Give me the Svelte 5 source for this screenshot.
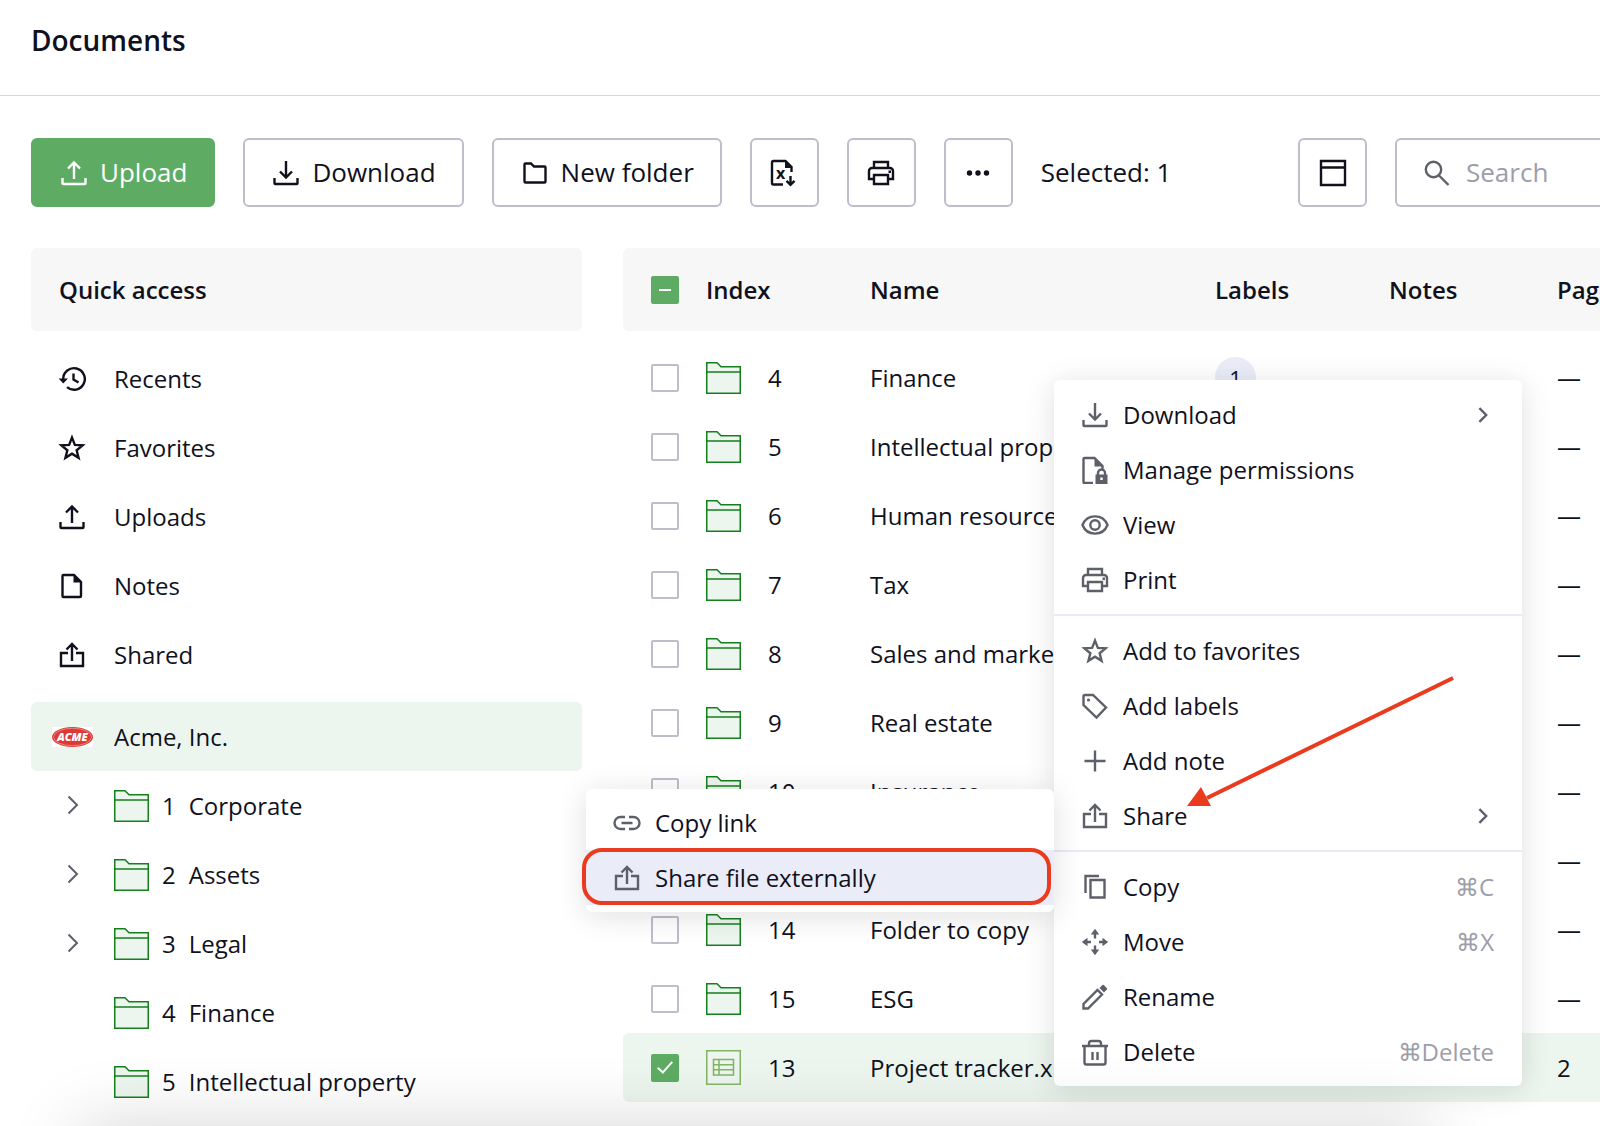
<script lang="ts">
  type Row = {
    index: number;
    name: string;
    labels?: number;
    pages?: number;
    kind: 'folder' | 'sheet';
    selected?: boolean;
  };

  type MenuItem = {
    icon: string;
    label: string;
    shortcut?: string;
    submenu?: MenuItem[];
    active?: boolean;
  };

  // Icons share a 28x28 grid: "line" is stroked, "solid" is filled.
  const icons: Record<string, { line?: string; solid?: string }> = {
    upload: { line: 'M2.5 19v5.2a.8.8 0 0 0 .8.8h21.4a.8.8 0 0 0 .8-.8V19M14 20V3.500M8 9.5l6-6 6 6' },
    download: { line: 'M2.5 19v5.2a.8.8 0 0 0 .8.8h21.4a.8.8 0 0 0 .8-.8V19M14 2v16M8 12.5l6 6 6-6' },
    newFolder: {
      line: 'M3.5 22.5V5.5a1 1 0 0 1 1-1H10l3 3h10.5a1 1 0 0 1 1 1v14a1 1 0 0 1-1 1h-19a1 1 0 0 1-1-1z'
    },
    excel: {
      line: 'M13 25.5H3.5A1.5 1.5 0 0 1 2 24V3.5A1.5 1.5 0 0 1 3.5 2h12l6 6v5M20.5 17v8.5M16.5 21.800l4 4 4-4',
      solid: 'M15 1.5 22.500 9H15z'
    },
    print: {
      line: 'M7 9V3h14v6M7 20H2v-8a3 3 0 0 1 3-3h18a3 3 0 0 1 3 3v8h-5M7 16h14v9H7z',
      solid: 'M21.5 11.5H24V14h-2.5z'
    },
    more: {
      solid:
        'M2.8 14a2.7 2.7 0 1 0 5.4 0a2.7 2.7 0 1 0-5.4 0M11.3 14a2.7 2.7 0 1 0 5.4 0a2.7 2.7 0 1 0-5.4 0M19.8 14a2.7 2.7 0 1 0 5.4 0a2.7 2.7 0 1 0-5.4 0'
    },
    layout: { line: 'M2 2h24v24H2zM2 8.5h24' },
    search: { line: 'M2.8 10.500a7.700 7.700 0 1 0 15.400 0a7.700 7.700 0 1 0-15.400 0M16 16.500l9.500 9.500' },
    history: { line: 'M5.2 14A10.8 10.8 0 1 1 9 22.2M15.5 8.5v6l5 3', solid: 'M.6 13.500H10l-4.700 5z' },
    star: {
      line: 'M14 3.600 16.880 10.840 24.650 11.340 18.660 16.300 20.580 23.860 14 19.700 7.420 23.860 9.340 16.300 3.350 11.340 11.120 10.840z'
    },
    note: { line: 'M4.500 4a1 1 0 0 1 1-1H16l7 7v14a1 1 0 0 1-1 1H5.500a1 1 0 0 1-1-1z', solid: 'M15.500 2.500 23.500 10.500h-8z' },
    share: { line: 'M10 12H3v13h22V12h-7M14 20V3M8.5 8.5 14 3l5.5 5.5' },
    permissions: {
      line: 'M12 27H3.500a1 1 0 0 1-1-1V3a1 1 0 0 1 1-1h10l8 8v2.500M17 19v-2a3.500 3.500 0 0 1 7 0v2',
      solid: 'M13.500 1.500 22.500 10.500h-9zM14.500 18.500h12V28h-12zM19.300 21.500V24h2.400v-2.500z'
    },
    view: { line: 'M1.500 14C6 2.500 22 2.500 26.500 14 22 25.500 6 25.500 1.500 14zM9.300 14a4.700 4.700 0 1 0 9.400 0a4.700 4.700 0 1 0-9.400 0' },
    label: {
      line: 'M2.500 4.500A1.500 1.500 0 0 1 4 3h8L25 15.500 15.500 25.500 2.500 13z',
      solid: 'M5.900 8a1.600 1.600 0 1 0 3.200 0a1.600 1.600 0 1 0-3.200 0'
    },
    plus: { line: 'M14 3.500v21M3.500 14h21' },
    copy: { line: 'M4.500 20V3H18M9.500 7h14v17.500h-14z' },
    move: {
      line: 'M14 5v5.500M14 17.500V23M5 14h5M18 14h5',
      solid: 'M9.800 6.500 14 .8l4.200 5.700zM9.800 21.500 14 27.200l4.200-5.700zM6.500 9.800.8 14l5.700 4.200zM21.500 9.800 27.200 14l-5.700 4.200z'
    },
    rename: {
      line: 'M2.500 25.500v-4.500L16.500 7l4.500 4.500-14 14z',
      solid: 'M18.500 5l2.900-2.900a1 1 0 0 1 1.400 0l3.100 3.100a1 1 0 0 1 0 1.400L23 9.500z'
    },
    trash: {
      line: 'M8 7.500v-2A2.500 2.500 0 0 1 10.500 3h7A2.500 2.500 0 0 1 20 5.500v2M1 8h26M3.500 8v16.500a2 2 0 0 0 2 2h17a2 2 0 0 0 2-2V8M11.500 14v8M16.500 14v8'
    },
    link: { line: 'M12 8H7.500a6 6 0 0 0 0 12H12M16 8h4.500a6 6 0 0 1 0 12H16M8.500 14h11' }
  };

  const quickAccess = [
    { icon: 'history', label: 'Recents' },
    { icon: 'star', label: 'Favorites' },
    { icon: 'upload', label: 'Uploads' },
    { icon: 'note', label: 'Notes' },
    { icon: 'share', label: 'Shared' }
  ];

  const tree = [
    { index: 1, name: 'Corporate', expandable: true },
    { index: 2, name: 'Assets', expandable: true },
    { index: 3, name: 'Legal', expandable: true },
    { index: 4, name: 'Finance', expandable: false },
    { index: 5, name: 'Intellectual property', expandable: false }
  ];

  let rows: Row[] = $state([
    { index: 4, name: 'Finance', labels: 1, kind: 'folder' },
    { index: 5, name: 'Intellectual property', kind: 'folder' },
    { index: 6, name: 'Human resources', kind: 'folder' },
    { index: 7, name: 'Tax', kind: 'folder' },
    { index: 8, name: 'Sales and marketing', kind: 'folder' },
    { index: 9, name: 'Real estate', kind: 'folder' },
    { index: 10, name: 'Insurance', kind: 'folder' },
    { index: 11, name: 'Compliance', kind: 'folder' },
    { index: 14, name: 'Folder to copy', kind: 'folder' },
    { index: 15, name: 'ESG', kind: 'folder' },
    { index: 13, name: 'Project tracker.xlsx', kind: 'sheet', pages: 2, selected: true }
  ]);

  let selectedCount = $derived(rows.filter((row) => row.selected).length);

  const menu: MenuItem[][] = [
    [
      { icon: 'download', label: 'Download', submenu: [] },
      { icon: 'permissions', label: 'Manage permissions' },
      { icon: 'view', label: 'View' },
      { icon: 'print', label: 'Print' }
    ],
    [
      { icon: 'star', label: 'Add to favorites' },
      { icon: 'label', label: 'Add labels' },
      { icon: 'plus', label: 'Add note' },
      {
        icon: 'share',
        label: 'Share',
        submenu: [
          { icon: 'link', label: 'Copy link' },
          { icon: 'share', label: 'Share file externally', active: true }
        ]
      }
    ],
    [
      { icon: 'copy', label: 'Copy', shortcut: '⌘C' },
      { icon: 'move', label: 'Move', shortcut: '⌘X' },
      { icon: 'rename', label: 'Rename' },
      { icon: 'trash', label: 'Delete', shortcut: '⌘Delete' }
    ]
  ];

  function toggleAll(event: Event) {
    const checked = (event.currentTarget as HTMLInputElement).checked;
    rows.forEach((row) => (row.selected = checked));
  }
</script>

{#snippet icon(name: string)}
  <svg class="icon" viewBox="0 0 28 28" aria-hidden="true">
    {#if icons[name].line}<path class="line" d={icons[name].line} />{/if}
    {#if icons[name].solid}<path class="solid" fill-rule="evenodd" d={icons[name].solid} />{/if}
    {#if name === 'excel'}<text class="solid" x="6" y="20">x</text>{/if}
  </svg>
{/snippet}

{#snippet chevron()}
  <svg class="chevron" viewBox="0 0 12 20" aria-hidden="true">
    <path d="M1.5 1.5 10 10l-8.5 8.5" />
  </svg>
{/snippet}

{#snippet folder()}
  <svg class="folder" viewBox="0 0 35 32" aria-hidden="true">
    <path d="M.75 31.25V.75H11l4 4h19.25v26.5zM.75 10h33.5" />
  </svg>
{/snippet}

{#snippet menuItem(item: MenuItem)}
  <li>
    <button class="menu-item" class:active={item.active}>
      {@render icon(item.icon)}
      <span class="menu-label">{item.label}</span>
      {#if item.shortcut}<kbd>{item.shortcut}</kbd>{/if}
      {#if item.submenu}{@render chevron()}{/if}
    </button>
    {#if item.submenu?.length}
      <ul class="submenu">
        {#each item.submenu as child}
          {@render menuItem(child)}
        {/each}
      </ul>
    {/if}
    {#if item.active}<div class="highlight"></div>{/if}
  </li>
{/snippet}

<div class="page">
  <header class="page-header">
    <h1>Documents</h1>
  </header>

  <div class="toolbar">
    <button class="btn primary">{@render icon('upload')}<span>Upload</span></button>
    <button class="btn">{@render icon('download')}<span>Download</span></button>
    <button class="btn">{@render icon('newFolder')}<span>New folder</span></button>
    <button class="btn square" aria-label="Export to Excel">{@render icon('excel')}</button>
    <button class="btn square" aria-label="Print">{@render icon('print')}</button>
    <button class="btn square" aria-label="More">{@render icon('more')}</button>
    <span>Selected: {selectedCount}</span>
    <button class="btn square layout-btn" aria-label="Layout">{@render icon('layout')}</button>
    <label class="search">
      {@render icon('search')}
      <input type="search" placeholder="Search" aria-label="Search" />
    </label>
  </div>

  <div class="content">
    <aside class="sidebar">
      <h2>Quick access</h2>
      <nav class="quick">
        {#each quickAccess as item}
          <a class="side-link" href="#{item.label.toLowerCase()}">{@render icon(item.icon)}{item.label}</a>
        {/each}
      </nav>

      <a class="project" href="#acme">
        <svg class="logo" viewBox="0 0 41 20" aria-hidden="true">
          <rect width="41" height="20" fill="#fff" />
          <ellipse cx="20.5" cy="10" rx="20.5" ry="10" fill="#dc3a34" />
          <ellipse cx="20.5" cy="10" rx="19" ry="8.7" fill="none" stroke="#f3b3ae" stroke-width=".6" />
          <text x="20.5" y="14" text-anchor="middle">ACME</text>
        </svg>
        Acme, Inc.
      </a>
      <ul class="tree">
        {#each tree as node}
          <li>
            <span class="toggle">
              {#if node.expandable}
                <button aria-label="Expand {node.name}">{@render chevron()}</button>
              {/if}
            </span>
            <a href="#folder-{node.index}">
              {@render folder()}
              <span>{node.index}</span>
              <span>{node.name}</span>
            </a>
          </li>
        {/each}
      </ul>
    </aside>

    <main class="documents">
      <table>
        <colgroup>
          <col class="col-check" />
          <col class="col-icon" />
          <col class="col-index" />
          <col class="col-name" />
          <col class="col-labels" />
          <col class="col-notes" />
          <col />
        </colgroup>
        <thead>
          <tr>
            <th class="check">
              <input
                type="checkbox"
                aria-label="Select all"
                checked={selectedCount === rows.length}
                indeterminate={selectedCount > 0 && selectedCount < rows.length}
                onchange={toggleAll}
              />
            </th>
            <th colspan="2">Index</th>
            <th>Name</th>
            <th>Labels</th>
            <th>Notes</th>
            <th>Pages</th>
          </tr>
        </thead>
        <tbody>
          {#each rows as row}
            <tr class:selected={row.selected}>
              <td class="check">
                <input type="checkbox" aria-label="Select {row.name}" bind:checked={row.selected} />
              </td>
              <td>
                {#if row.kind === 'folder'}
                  {@render folder()}
                {:else}
                  <svg class="sheet" viewBox="0 0 35 35" aria-hidden="true">
                    <path d="M.75.75h33.5v33.5H.75zM7.500 9.500h20v15.500h-20zM13 9.500V25M7.500 14.700h20M7.500 19.800h20" />
                  </svg>
                {/if}
              </td>
              <td>{row.index}</td>
              <td>{row.name}</td>
              <td>{#if row.labels}<span class="count">{row.labels}</span>{/if}</td>
              <td></td>
              <td>{row.pages ?? '—'}</td>
            </tr>
          {/each}
        </tbody>
      </table>
    </main>
  </div>

  <div class="context-menu">
    {#each menu as group}
      <ul class="group">
        {#each group as item}
          {@render menuItem(item)}
        {/each}
      </ul>
    {/each}
    <svg class="arrow" viewBox="0 0 268 132" aria-hidden="true">
      <path d="M266 2 20 122" />
      <polygon points="0,130 14,111 24,130" />
    </svg>
  </div>

  <div class="bottom-panel"></div>
</div>

<style>
  :global(body) {
    margin: 0;
  }

  .page {
    position: relative;
    min-height: 100vh;
    overflow: hidden;
    background: #fff;
    color: #10111d;
    font-family: 'Open Sans', 'Noto Sans', sans-serif;
    font-size: 24px;
    line-height: 32px;
  }

  .page *,
  .page *::after {
    box-sizing: border-box;
  }

  button,
  input,
  kbd {
    font: inherit;
    color: inherit;
  }

  button {
    padding: 0;
    border: 0;
    background: none;
    cursor: pointer;
  }

  a {
    color: inherit;
    text-decoration: none;
  }

  ul {
    margin: 0;
    padding: 0;
    list-style: none;
  }

  .icon {
    display: block;
    flex: none;
    width: 28px;
    height: 28px;
  }

  .line {
    fill: none;
    stroke: currentColor;
    stroke-width: 2.4;
  }

  .solid {
    fill: currentColor;
  }

  .icon text {
    font-size: 16px;
    font-weight: 700;
  }

  .chevron {
    display: block;
    width: 12px;
    height: 20px;
    fill: none;
    stroke: #5d5f6b;
    stroke-width: 2;
  }

  .folder,
  .sheet {
    display: block;
    width: 35px;
    height: 32px;
    fill: #ecf6ee;
    stroke: #14801d;
    stroke-width: 1.5;
  }

  .sheet {
    height: 35px;
    stroke: #83b366;
  }

  .page-header {
    display: flex;
    align-items: center;
    height: 96px;
    padding: 0 31px 16px;
    border-bottom: 1px solid #d5d6e2;
  }

  h1,
  h2 {
    margin: 0;
    font-size: 28px;
    font-weight: 600;
  }

  .toolbar {
    display: flex;
    align-items: center;
    gap: 28px;
    padding: 42px 0 41px 31px;
    font-size: 26px;
  }

  .toolbar span,
  .search input {
    padding: 0 0 2px;
  }

  .btn {
    display: flex;
    align-items: center;
    justify-content: center;
    gap: 12px;
    height: 69px;
    padding: 0 26px 0 27px;
    border: 2px solid #bdbecb;
    border-radius: 6px;
    white-space: nowrap;
  }

  .btn.primary {
    border-color: #5eac64;
    background: #5eac64;
    color: #fff;
  }

  .btn.square {
    width: 69px;
    padding: 0;
  }

  .layout-btn {
    margin-left: auto;
  }

  .search {
    display: flex;
    align-items: center;
    gap: 15px;
    width: 205px;
    height: 69px;
    padding-left: 26px;
    border: 2px solid #bdbecb;
    border-right: 0;
    border-radius: 6px 0 0 6px;
    color: #5d5f69;
  }

  .search input {
    flex: 1;
    min-width: 0;
    border: 0;
    outline: 0;
    background: none;
  }

  .search input::placeholder {
    color: #9d9ea8;
    opacity: 1;
  }

  .content {
    display: flex;
    gap: 41px;
    padding-left: 31px;
  }

  .sidebar {
    flex: none;
    width: 551px;
  }

  h2 {
    padding: 26px 28px 25px;
    border-radius: 6px;
    background: #f7f7f7;
    font-size: 24px;
  }

  .quick {
    padding: 13px 0;
  }

  .side-link {
    display: flex;
    align-items: center;
    gap: 28px;
    height: 69px;
    padding-left: 27px;
  }

  .project {
    display: flex;
    align-items: center;
    gap: 21px;
    height: 69px;
    padding-left: 21px;
    border-radius: 6px;
    background: #ecf6ee;
  }

  .logo {
    width: 41px;
    height: 20px;
  }

  .logo text {
    fill: #fff;
    font-size: 11px;
    font-style: italic;
    font-weight: 800;
  }

  .tree li {
    display: flex;
    align-items: center;
    height: 69px;
  }

  .tree a {
    display: flex;
    align-items: center;
    gap: 13px;
  }

  .toggle {
    width: 83px;
    padding-left: 36px;
  }

  .documents {
    flex: 1;
    min-width: 0;
    overflow: hidden;
  }

  table {
    width: 100%;
    table-layout: fixed;
    border-collapse: separate;
    border-spacing: 0;
    white-space: nowrap;
  }

  th,
  td {
    height: 69px;
    padding: 0;
    text-align: left;
  }

  th {
    height: 83px;
    background: #f7f7f7;
    font-weight: 600;
  }

  thead::after {
    content: '';
    display: block;
    height: 12px;
  }

  th:first-child,
  td:first-child {
    border-radius: 6px 0 0 6px;
  }

  .check {
    padding-left: 28px;
  }

  .selected td {
    background: #ecf6ee;
  }

  .col-check {
    width: 83px;
  }

  .col-icon {
    width: 62px;
  }

  .col-index {
    width: 102px;
  }

  .col-name {
    width: 345px;
  }

  .col-labels {
    width: 174px;
  }

  .col-notes {
    width: 168px;
  }

  input[type='checkbox'] {
    appearance: none;
    display: grid;
    place-items: center;
    width: 28px;
    height: 28px;
    margin: 0;
    border: 2px solid #bdbecb;
    border-radius: 2px;
    background: #fff;
  }

  input[type='checkbox']:checked,
  input[type='checkbox']:indeterminate {
    border-color: #5eac64;
    background: #5eac64;
  }

  input[type='checkbox']:checked::after {
    content: '';
    width: 8px;
    height: 15px;
    margin-bottom: 5px;
    border: solid #fff;
    border-width: 0 2px 2px 0;
    transform: rotate(42deg);
  }

  input[type='checkbox']:indeterminate::after {
    content: '';
    width: 12px;
    height: 2px;
    background: #fff;
  }

  .count {
    display: flex;
    align-items: center;
    justify-content: center;
    width: 41px;
    height: 41px;
    border-radius: 50%;
    background: #eaecf7;
    font-size: 22px;
  }

  .context-menu {
    position: absolute;
    top: 380px;
    right: 78px;
    width: 468px;
    border-radius: 6px;
    background: #fff;
    box-shadow: 0 4px 30px rgba(16, 17, 29, 0.13);
  }

  .group {
    padding: 7px 0;
  }

  .group + .group {
    border-top: 2px solid #e8eaf4;
  }

  .group li {
    position: relative;
  }

  .menu-item {
    display: flex;
    align-items: center;
    gap: 14px;
    width: 100%;
    height: 55px;
    padding: 0 28px 0 27px;
    text-align: left;
  }

  .menu-item .icon {
    color: #5d5f69;
  }

  .menu-item.active {
    background: #eaecf7;
  }

  .menu-label {
    flex: 1;
  }

  .menu-item kbd {
    color: #9d9ea8;
  }

  .menu-item .chevron {
    width: 10px;
    height: 16px;
    margin-right: 6px;
    stroke-width: 3;
  }

  .submenu {
    position: absolute;
    top: 1px;
    right: 100%;
    width: 468px;
    padding: 6px 0 7px;
    border-radius: 6px;
    background: #fff;
    box-shadow: 0 4px 30px rgba(16, 17, 29, 0.13);
  }

  .highlight {
    position: absolute;
    inset: -2px 3px 0 -4px;
    border: 4px solid #ea3b1f;
    border-radius: 20px;
    pointer-events: none;
  }

  .arrow {
    position: absolute;
    top: 296px;
    left: 133px;
    width: 268px;
    height: 132px;
    pointer-events: none;
  }

  .arrow path {
    stroke: #ea3b1f;
    stroke-width: 4;
  }

  .arrow polygon {
    fill: #ea3b1f;
  }

  .bottom-panel {
    position: fixed;
    top: 100%;
    right: 170px;
    left: 80px;
    height: 100px;
    box-shadow: 0 0 70px rgba(0, 0, 0, 0.17);
    pointer-events: none;
  }
</style>
